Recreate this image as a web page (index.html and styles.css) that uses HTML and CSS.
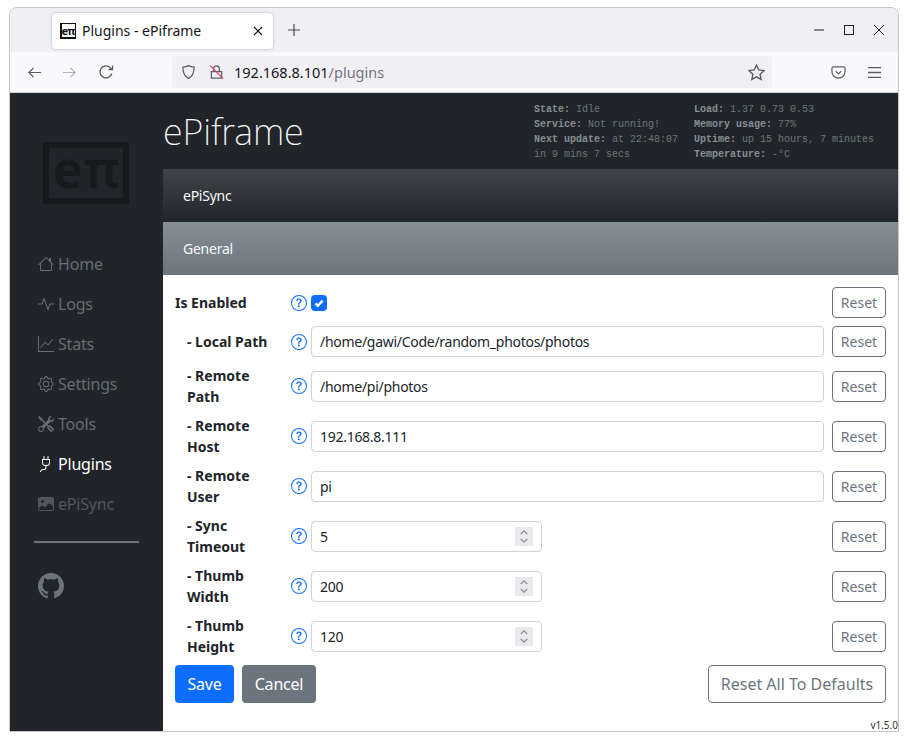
FILE: index.html
```html
<!DOCTYPE html>
<html lang="en">
<head>
<meta charset="utf-8">
<title>Plugins - ePiframe</title>
<link rel="stylesheet" href="styles.css">
</head>
<body>
<div class="window">
  <div class="tabstrip">
    <div class="tab">
      <span class="favicon"><span class="favicon-text">eπ</span></span>
      <span class="tab-title">Plugins - ePiframe</span>
      <svg class="tab-close" viewBox="0 0 10 10"><path d="M1 1l8 8M9 1l-8 8"/></svg>
    </div>
    <svg class="tab-new" viewBox="0 0 12 12"><path d="M6 0v12M0 6h12"/></svg>
    <div class="win-controls">
      <svg class="wc" viewBox="0 0 10 10"><path d="M0 5h10"/></svg>
      <svg class="wc" viewBox="0 0 10 10"><rect x=".5" y=".5" width="9" height="9"/></svg>
      <svg class="wc" viewBox="0 0 10 10"><path d="M0 0l10 10M10 0L0 10"/></svg>
    </div>
  </div>
  <div class="toolbar">
    <svg class="tb-back" viewBox="0 0 16 16"><path d="M15 8H2M7 3L2 8l5 5"/></svg>
    <svg class="tb-forward" viewBox="0 0 16 16"><path d="M1 8h13M9 3l5 5-5 5"/></svg>
    <svg class="tb-reload" viewBox="0 0 16 16"><path d="M13.8 9.5A6 6 0 1 1 12.2 3.600L14 5.500M14.500 1.500v4h-4"/></svg>
    <div class="urlbar">
      <svg class="ub-shield" viewBox="0 0 16 16"><path d="M8 1.200c2 1 4 1.500 6 1.600 0 5.500-1.800 9.800-6 12-4.200-2.200-6-6.500-6-12 2-.1 4-.6 6-1.600z"/></svg>
      <svg class="ub-lock" viewBox="0 0 16 16"><path class="lk" d="M5 7V4.500a3 3 0 0 1 6 0V7M2.500 7.500h11v7h-11z"/><path class="lk-x" d="M1 1l14 14"/></svg>
      <span class="url"><span class="url-host">192.168.8.101</span><span class="url-path">/plugins</span></span>
      <svg class="ub-star" viewBox="0 0 16 16"><path d="M8 1l2.100 4.600 5 .6-3.700 3.400 1 4.900L8 12.100l-4.400 2.400 1-4.900L.9 6.200l5-.6z"/></svg>
    </div>
    <svg class="tb-pocket" viewBox="0 0 16 16"><path d="M2.500 2h11A1.500 1.500 0 0 1 15 3.500V7A7 7 0 0 1 1 7V3.500A1.500 1.500 0 0 1 2.500 2zM5 6.500l3 3 3-3"/></svg>
    <svg class="tb-menu" viewBox="0 0 13 11"><path d="M0 .5h13M0 5.500h13M0 10.500h13"/></svg>
  </div>
  <div class="page">
    <aside class="sidebar">
      <div class="logo"><span class="logo-e">e</span><span class="logo-pi">π</span></div>
      <nav class="nav">
        <a class="nav-item"><svg class="ico" viewBox="0 0 16 16"><path d="M8.707 1.5a1 1 0 0 0-1.414 0L.646 8.146a.5.5 0 0 0 .708.708L2 8.207V13.5A1.500 1.500 0 0 0 3.500 15h9a1.500 1.500 0 0 0 1.500-1.500V8.207l.646.647a.5.5 0 0 0 .708-.708L13 5.793V2.500a.5.500 0 0 0-.5-.5h-1a.5.500 0 0 0-.5.5v1.293L8.707 1.500ZM13 7.207V13.500a.5.500 0 0 1-.5.5h-9a.5.500 0 0 1-.5-.5V7.207l5-5 5 5Z"/></svg>Home</a>
        <a class="nav-item"><svg class="ico" viewBox="0 0 16 16"><path d="M6 2a.5.500 0 0 1 .47.33L10 12.036l1.530-4.208A.5.500 0 0 1 12 7.500h3.500a.5.500 0 0 1 0 1h-3.150l-1.880 5.170a.5.500 0 0 1-.94 0L6 3.964 4.470 8.171A.5.500 0 0 1 4 8.500H.5a.5.500 0 0 1 0-1h3.150l1.880-5.170A.5.500 0 0 1 6 2Z"/></svg>Logs</a>
        <a class="nav-item"><svg class="ico" viewBox="0 0 16 16"><path d="M0 0h1v15h15v1H0V0Zm14.817 3.113a.5.500 0 0 1 .07.704l-4.500 5.500a.5.500 0 0 1-.74.037L7.060 6.767l-3.656 5.027a.5.500 0 0 1-.808-.588l4-5.500a.5.500 0 0 1 .758-.06l2.609 2.610 4.150-5.073a.5.500 0 0 1 .704-.07Z"/></svg>Stats</a>
        <a class="nav-item"><svg class="ico" viewBox="0 0 16 16"><path d="M8 4.754a3.246 3.246 0 1 0 0 6.492 3.246 3.246 0 0 0 0-6.492zM5.754 8a2.246 2.246 0 1 1 4.492 0 2.246 2.246 0 0 1-4.492 0z"/><path d="M9.796 1.343c-.527-1.790-3.065-1.790-3.592 0l-.094.319a.873.873 0 0 1-1.255.52l-.292-.16c-1.640-.892-3.433.902-2.540 2.541l.159.292a.873.873 0 0 1-.52 1.255l-.319.094c-1.790.527-1.790 3.065 0 3.592l.319.094a.873.873 0 0 1 .52 1.255l-.16.292c-.892 1.640.901 3.434 2.541 2.540l.292-.159a.873.873 0 0 1 1.255.52l.094.319c.527 1.790 3.065 1.790 3.592 0l.094-.319a.873.873 0 0 1 1.255-.52l.292.16c1.640.893 3.434-.902 2.540-2.541l-.159-.292a.873.873 0 0 1 .52-1.255l.319-.094c1.790-.527 1.790-3.065 0-3.592l-.319-.094a.873.873 0 0 1-.52-1.255l.16-.292c.893-1.640-.902-3.433-2.541-2.540l-.292.159a.873.873 0 0 1-1.255-.52l-.094-.319zm-2.633.283c.246-.835 1.428-.835 1.674 0l.094.319a1.873 1.873 0 0 0 2.693 1.115l.291-.16c.764-.415 1.600.42 1.184 1.185l-.159.292a1.873 1.873 0 0 0 1.116 2.692l.318.094c.835.246.835 1.428 0 1.674l-.319.094a1.873 1.873 0 0 0-1.115 2.693l.16.291c.415.764-.42 1.600-1.185 1.184l-.291-.159a1.873 1.873 0 0 0-2.693 1.116l-.094.318c-.246.835-1.428.835-1.674 0l-.094-.319a1.873 1.873 0 0 0-2.692-1.115l-.292.16c-.764.415-1.600-.42-1.184-1.185l.159-.291A1.873 1.873 0 0 0 1.945 8.930l-.319-.094c-.835-.246-.835-1.428 0-1.674l.319-.094A1.873 1.873 0 0 0 3.060 4.377l-.16-.292c-.415-.764.42-1.600 1.185-1.184l.292.159a1.873 1.873 0 0 0 2.692-1.115l.094-.319z"/></svg>Settings</a>
        <a class="nav-item"><svg class="ico" viewBox="0 0 16 16"><path d="M1 0 0 1l2.200 3.081a1 1 0 0 0 .815.419h.07a1 1 0 0 1 .708.293l2.675 2.675-2.617 2.654A3.003 3.003 0 0 0 0 13a3 3 0 1 0 5.878-.851l2.654-2.617.968.968-.305.914a1 1 0 0 0 .242 1.023l3.270 3.270a.997.997 0 0 0 1.414 0l1.586-1.586a.997.997 0 0 0 0-1.414l-3.270-3.270a1 1 0 0 0-1.023-.242L10.500 9.500l-.96-.96 2.680-2.643A3.005 3.005 0 0 0 16 3c0-.269-.035-.53-.102-.777l-2.140 2.141L12 4l-.364-1.757L13.777.102a3 3 0 0 0-3.675 3.680L7.462 6.460 4.793 3.793a1 1 0 0 1-.293-.707v-.071a1 1 0 0 0-.419-.814L1 0Zm9.646 10.646a.5.500 0 0 1 .708 0l2.914 2.915a.5.500 0 0 1-.707.707l-2.915-2.914a.5.500 0 0 1 0-.708ZM3 11l.471.242.529.026.287.445.445.287.026.529L5 13l-.242.471-.026.529-.445.287-.287.445-.529.026L3 15l-.471-.242L2 14.732l-.287-.445L1.268 14l-.026-.529L1 13l.242-.471.026-.529.445-.287.287-.445.529-.026L3 11Z"/></svg>Tools</a>
        <a class="nav-item nav-active"><svg class="ico" viewBox="0 0 16 16"><path d="M6 0a.5.500 0 0 1 .5.5V3h3V.5a.5.500 0 0 1 1 0V3h1a.5.500 0 0 1 .5.5v3A3.500 3.500 0 0 1 8.500 10c-.002.434-.01.845-.04 1.220-.041.514-.126 1.003-.317 1.424a2.083 2.083 0 0 1-.97 1.028C6.725 13.900 6.169 14 5.500 14c-.998 0-1.610.33-1.974.718A1.922 1.922 0 0 0 3 16H2c0-.616.232-1.367.797-1.968C3.374 13.420 4.261 13 5.500 13c.581 0 .962-.088 1.218-.219.241-.123.4-.3.514-.55.121-.266.193-.621.23-1.090.027-.34.035-.718.037-1.141A3.500 3.500 0 0 1 4 6.500v-3a.5.500 0 0 1 .5-.5h1V.5A.5.500 0 0 1 6 0zM5 4v2.500A2.500 2.500 0 0 0 7.500 9h1A2.500 2.500 0 0 0 11 6.500V4H5z"/></svg>Plugins</a>
        <a class="nav-item nav-dim"><svg class="ico" viewBox="0 0 16 16"><path d="M.002 3a2 2 0 0 1 2-2h12a2 2 0 0 1 2 2v10a2 2 0 0 1-2 2h-12a2 2 0 0 1-2-2V3zm1 9v1a1 1 0 0 0 1 1h12a1 1 0 0 0 1-1V9.500l-3.777-1.947a.5.500 0 0 0-.577.093l-3.710 3.710-2.660-1.772a.5.500 0 0 0-.63.062L1.002 12zm5-6.500a1.500 1.500 0 1 0-3 0 1.500 1.500 0 0 0 3 0z"/></svg>ePiSync</a>
      </nav>
      <hr class="side-rule">
      <svg class="github" viewBox="0 0 16 16"><path d="M8 0C3.580 0 0 3.580 0 8c0 3.540 2.290 6.530 5.470 7.590.4.07.55-.17.55-.38 0-.19-.01-.82-.01-1.490-2.010.37-2.530-.49-2.690-.94-.09-.23-.48-.94-.82-1.130-.28-.15-.68-.52-.01-.53.63-.01 1.080.58 1.230.82.72 1.210 1.870.87 2.330.66.07-.52.28-.87.51-1.070-1.780-.2-3.640-.89-3.640-3.950 0-.87.31-1.590.82-2.150-.08-.2-.36-1.020.08-2.120 0 0 .67-.21 2.200.82.64-.18 1.320-.27 2-.27.68 0 1.360.09 2 .27 1.530-1.040 2.200-.82 2.200-.82.44 1.100.16 1.920.08 2.120.51.56.82 1.270.82 2.150 0 3.070-1.870 3.750-3.650 3.950.29.25.54.73.54 1.480 0 1.070-.01 1.930-.01 2.200 0 .21.15.46.55.38A8.012 8.012 0 0 0 16 8c0-4.420-3.580-8-8-8z"/></svg>
    </aside>
    <main class="main">
      <header class="topbar">
        <h1 class="brand">ePiframe</h1>
        <div class="stats">
          <div class="stats-col stats-a">
            <div><b>State:</b> Idle</div>
            <div><b>Service:</b> Not running!</div>
            <div><b>Next update:</b> at 22:48:07</div>
            <div>in 9 mins 7 secs</div>
          </div>
          <div class="stats-col">
            <div><b>Load:</b> 1.37 0.73 0.53</div>
            <div><b>Memory usage:</b> 77%</div>
            <div><b>Uptime:</b> up 15 hours, 7 minutes</div>
            <div><b>Temperature:</b> -°C</div>
          </div>
        </div>
      </header>
      <div class="band band-dark">ePiSync</div>
      <div class="band band-grey">General</div>
      <form class="form">
        <div class="row">
          <label class="lbl">Is Enabled</label>
          <svg class="help" viewBox="0 0 16 16"><use href="#q"/></svg>
          <div class="field"><span class="check"><svg viewBox="0 0 20 20"><path d="M5.500 10.500l3 3 6-6.500"/></svg></span></div>
          <button type="button" class="reset">Reset</button>
        </div>
        <div class="row">
          <label class="lbl sub">- Local Path</label>
          <svg class="help" viewBox="0 0 16 16"><use href="#q"/></svg>
          <div class="field"><input class="inp" type="text" value="/home/gawi/Code/random_photos/photos"></div>
          <button type="button" class="reset">Reset</button>
        </div>
        <div class="row">
          <label class="lbl sub">- Remote Path</label>
          <svg class="help" viewBox="0 0 16 16"><use href="#q"/></svg>
          <div class="field"><input class="inp" type="text" value="/home/pi/photos"></div>
          <button type="button" class="reset">Reset</button>
        </div>
        <div class="row">
          <label class="lbl sub">- Remote Host</label>
          <svg class="help" viewBox="0 0 16 16"><use href="#q"/></svg>
          <div class="field"><input class="inp" type="text" value="192.168.8.111"></div>
          <button type="button" class="reset">Reset</button>
        </div>
        <div class="row">
          <label class="lbl sub">- Remote User</label>
          <svg class="help" viewBox="0 0 16 16"><use href="#q"/></svg>
          <div class="field"><input class="inp" type="text" value="pi"></div>
          <button type="button" class="reset">Reset</button>
        </div>
        <div class="row">
          <label class="lbl sub">- Sync Timeout</label>
          <svg class="help" viewBox="0 0 16 16"><use href="#q"/></svg>
          <div class="field num"><input class="inp" type="text" value="5"><span class="spin"><svg viewBox="0 0 18 20"><path d="M5.500 7.500L9 4l3.500 3.500M5.500 12.500L9 16l3.500-3.500"/></svg></span></div>
          <button type="button" class="reset">Reset</button>
        </div>
        <div class="row">
          <label class="lbl sub">- Thumb Width</label>
          <svg class="help" viewBox="0 0 16 16"><use href="#q"/></svg>
          <div class="field num"><input class="inp" type="text" value="200"><span class="spin"><svg viewBox="0 0 18 20"><path d="M5.500 7.500L9 4l3.500 3.500M5.500 12.500L9 16l3.500-3.500"/></svg></span></div>
          <button type="button" class="reset">Reset</button>
        </div>
        <div class="row">
          <label class="lbl sub">- Thumb Height</label>
          <svg class="help" viewBox="0 0 16 16"><use href="#q"/></svg>
          <div class="field num"><input class="inp" type="text" value="120"><span class="spin"><svg viewBox="0 0 18 20"><path d="M5.500 7.500L9 4l3.500 3.500M5.500 12.500L9 16l3.500-3.500"/></svg></span></div>
          <button type="button" class="reset">Reset</button>
        </div>
        <div class="actions">
          <button type="button" class="btn btn-primary">Save</button>
          <button type="button" class="btn btn-secondary">Cancel</button>
          <button type="button" class="btn btn-outline">Reset All To Defaults</button>
        </div>
      </form>
      <div class="version">v1.5.0</div>
    </main>
  </div>
</div>
<svg class="defs" width="0" height="0"><defs><g id="q"><path d="M8 15A7 7 0 1 1 8 1a7 7 0 0 1 0 14zm0 1A8 8 0 1 0 8 0a8 8 0 0 0 0 16z"/><path d="M5.255 5.786a.237.237 0 0 0 .241.247h.825c.138 0 .248-.113.266-.25.09-.656.54-1.134 1.342-1.134.686 0 1.314.343 1.314 1.168 0 .635-.374.927-.965 1.371-.673.489-1.206 1.060-1.168 1.987l.003.217a.25.25 0 0 0 .25.246h.811a.25.25 0 0 0 .25-.25v-.105c0-.718.273-.927 1.010-1.486.609-.463 1.244-.977 1.244-2.056 0-1.511-1.276-2.241-2.673-2.241-1.267 0-2.655.59-2.750 2.286zm1.557 5.763c0 .533.425.927 1.010.927.609 0 1.028-.394 1.028-.927 0-.552-.42-.94-1.029-.94-.584 0-1.009.388-1.009.94z"/></g></defs></svg>
</body>
</html>
```
FILE: styles.css
```css
* { box-sizing: border-box; }
html, body { margin: 0; padding: 0; background: #fff; }
body { font-family: "Noto Sans", "Open Sans", sans-serif; height: 741px; overflow: hidden; }
.defs { position: absolute; }

.window {
  margin: 7px 0 0 9px;
  width: 890px;
  height: 725px;
  border: 1px solid #c6c6c8;
  border-radius: 8px 8px 0 0;
  display: flex;
  flex-direction: column;
  overflow: hidden;
  position: relative;
}

/* browser chrome */
.tabstrip {
  height: 44px;
  background: #f0f0f4;
  display: flex;
  align-items: center;
  padding-left: 42px;
  flex: none;
}
.tab {
  width: 221px;
  height: 36px;
  background: #fff;
  border-radius: 4px;
  box-shadow: 0 0 3px rgba(0,0,0,.25);
  display: flex;
  align-items: center;
  padding: 0 10px 0 8px;
  margin-top: 1px;
}
.favicon {
  width: 16px;
  height: 16px;
  background: #111;
  padding: 1.500px;
  display: flex;
  flex: none;
}
.favicon-text {
  flex: 1;
  background: #fff;
  color: #111;
  font: 700 11px/13px "Noto Sans", sans-serif;
  text-align: center;
  letter-spacing: -1px;
  overflow: hidden;
}
.tab-title {
  font-size: 14px;
  color: #15141a;
  margin-left: 6px;
  flex: 1;
  white-space: nowrap;
}
.tab-close { width: 10px; height: 10px; stroke: #15141a; stroke-width: 1.100; fill: none; flex: none; }
.tab-new { width: 12px; height: 12px; margin-left: 15px; stroke: #4a4a50; stroke-width: 1.200; fill: none; flex: none; }
.win-controls { margin-left: auto; display: flex; gap: 20px; padding-right: 14px; }
.wc { width: 10px; height: 10px; stroke: #222; stroke-width: 1; fill: none; overflow: visible; }

.toolbar {
  height: 41px;
  background: #f9f9fb;
  border-bottom: 1px solid #cfcfd8;
  display: flex;
  align-items: center;
  flex: none;
  padding-left: 17px;
}
.toolbar svg { fill: none; stroke: #5b5b66; stroke-width: 1.300; flex: none; }
.tb-back { width: 15px; height: 15px; }
.tb-forward { width: 15px; height: 15px; margin-left: 20px; stroke: #b4b4bb !important; }
.tb-reload { width: 16px; height: 16px; margin-left: 21px; }
.urlbar {
  width: 600px;
  height: 32px;
  margin-left: 58px;
  background: #f0f0f4;
  border-radius: 4px;
  display: flex;
  align-items: center;
  padding-left: 9px;
}
.ub-shield { width: 15px; height: 16px; }
.ub-lock { width: 15px; height: 16px; margin-left: 13px; }
.toolbar .lk-x { stroke: #e2405a; }
.url { margin-left: 10px; font-size: 14.500px; white-space: nowrap; flex: 1; }
.url-host { color: #15141a; }
.url-path { color: #75757f; }
.ub-star { width: 17px; height: 17px; margin-right: 7px; }
.tb-pocket { width: 15px; height: 15px; margin-left: 59px; }
.tb-menu { width: 13px; height: 11px; margin-left: 22px; }

/* page */
.page { flex: 1; display: flex; min-height: 0; background: #fff; }
.sidebar {
  width: 153px;
  flex: none;
  background: #212529;
  padding: 49px 24px 0;
  display: flex;
  flex-direction: column;
}
.logo {
  width: 86px;
  height: 62px;
  margin-left: 9px;
  border: 6px solid #17191c;
  display: flex;
  align-items: center;
  justify-content: center;
  color: #17191c;
  font-family: "Noto Sans", sans-serif;
  line-height: 50px;
}
.logo-e { font-size: 50px; font-weight: 700; margin-top: -8px; }
.logo-pi { font-size: 50px; font-weight: 600; margin-top: -8px; margin-left: 1px; }
.nav { margin-top: 40px; display: flex; flex-direction: column; }
.nav-item {
  height: 40px;
  display: flex;
  align-items: center;
  gap: 4px;
  padding-left: 4px;
  color: #666c73;
  font-size: 16px;
  letter-spacing: -.2px;
  white-space: nowrap;
}
.ico { width: 16px; height: 16px; fill: currentColor; flex: none; }
.nav-active { color: #fff; }
.nav-dim { color: #51565c; }
.side-rule { width: 105px; height: 2px; margin: 17px 0 0; border: 0; background: #6c757d; }
.github { width: 26px; height: 26px; margin: 30px 0 0 4px; fill: #6c757d; flex: none; }

.main { flex: 1; min-width: 0; display: flex; flex-direction: column; position: relative; }
.topbar { height: 76px; background: #212529; position: relative; display: flex; flex: none; }
.brand {
  margin: 16px 0 0;
  font: 200 36px/46px "Noto Sans", sans-serif;
  letter-spacing: -.1px;
  color: #f8f9fa;
}
.stats {
  display: flex;
  margin-left: auto;
  padding: 9px 24px 0 0;
  font: 10px/15px "Liberation Mono", monospace;
  color: #6c757d;
  white-space: nowrap;
}
.stats b { color: #868e96; font-weight: 700; }
.stats-a { width: 160px; }
.band {
  height: 53px;
  flex: none;
  display: flex;
  align-items: center;
  padding-left: 20px;
  font-size: 14px;
  letter-spacing: -.25px;
  color: #f8f9fa;
}
.band-dark { background: linear-gradient(#40454a, #212529); }
.band-grey { background: linear-gradient(#868e96, #6c757d); }

.form { padding: 12px 12px 0; display: flex; flex-direction: column; gap: 8px; }
.row {
  display: grid;
  grid-template-columns: 112px 16px 513px 58px;
  column-gap: 4px;
  align-items: center;
  min-height: 31px;
}
.lbl {
  font-size: 14px;
  font-weight: 700;
  line-height: 21px;
  color: #212529;
}
.sub { padding: 0 14px 0 12px; }
.help { width: 16px; height: 16px; fill: #0d6efd; justify-self: center; }
.field { display: flex; align-items: center; position: relative; }
.num { width: 231px; }
.check {
  width: 16px;
  height: 16px;
  background: #0d6efd;
  border-radius: 4px;
  display: block;
}
.check svg { display: block; width: 16px; height: 16px; fill: none; stroke: #fff; stroke-width: 3; }
.inp {
  width: 100%;
  height: 31px;
  border: 1px solid #ced4da;
  border-radius: 4px;
  padding: 0 8px;
  font: 14px "Noto Sans", sans-serif;
  letter-spacing: -.28px;
  color: #212529;
  background: #fff;
  outline: 0;
}
.spin {
  position: absolute;
  right: 9px;
  top: 6px;
  width: 18px;
  height: 19px;
  background: #e9e9ed;
}
.spin svg { display: block; width: 18px; height: 19px; fill: none; stroke: #8a8a90; stroke-width: 1.300; }
.reset {
  width: 54px;
  height: 31px;
  padding: 0;
  border: 1px solid #6c757d;
  border-radius: 4px;
  background: #fff;
  color: #6c757d;
  font: 14px "Noto Sans", sans-serif;
  justify-self: end;
}
.actions { display: flex; gap: 8px; }
.btn {
  height: 38px;
  padding: 0;
  border: 1px solid transparent;
  border-radius: 4px;
  font: 16px "Noto Sans", sans-serif;
}
.btn-primary { width: 59px; background: #0d6efd; color: #fff; letter-spacing: -.2px; }
.btn-secondary { width: 74px; background: #6c757d; color: #fff; letter-spacing: -.2px; }
.btn-outline { width: 178px; margin-left: auto; background: #fff; color: #6c757d; border-color: #6c757d; }
.version {
  position: absolute;
  right: 0;
  bottom: 0;
  font-size: 10px;
  line-height: 12px;
  color: #333;
}
```
